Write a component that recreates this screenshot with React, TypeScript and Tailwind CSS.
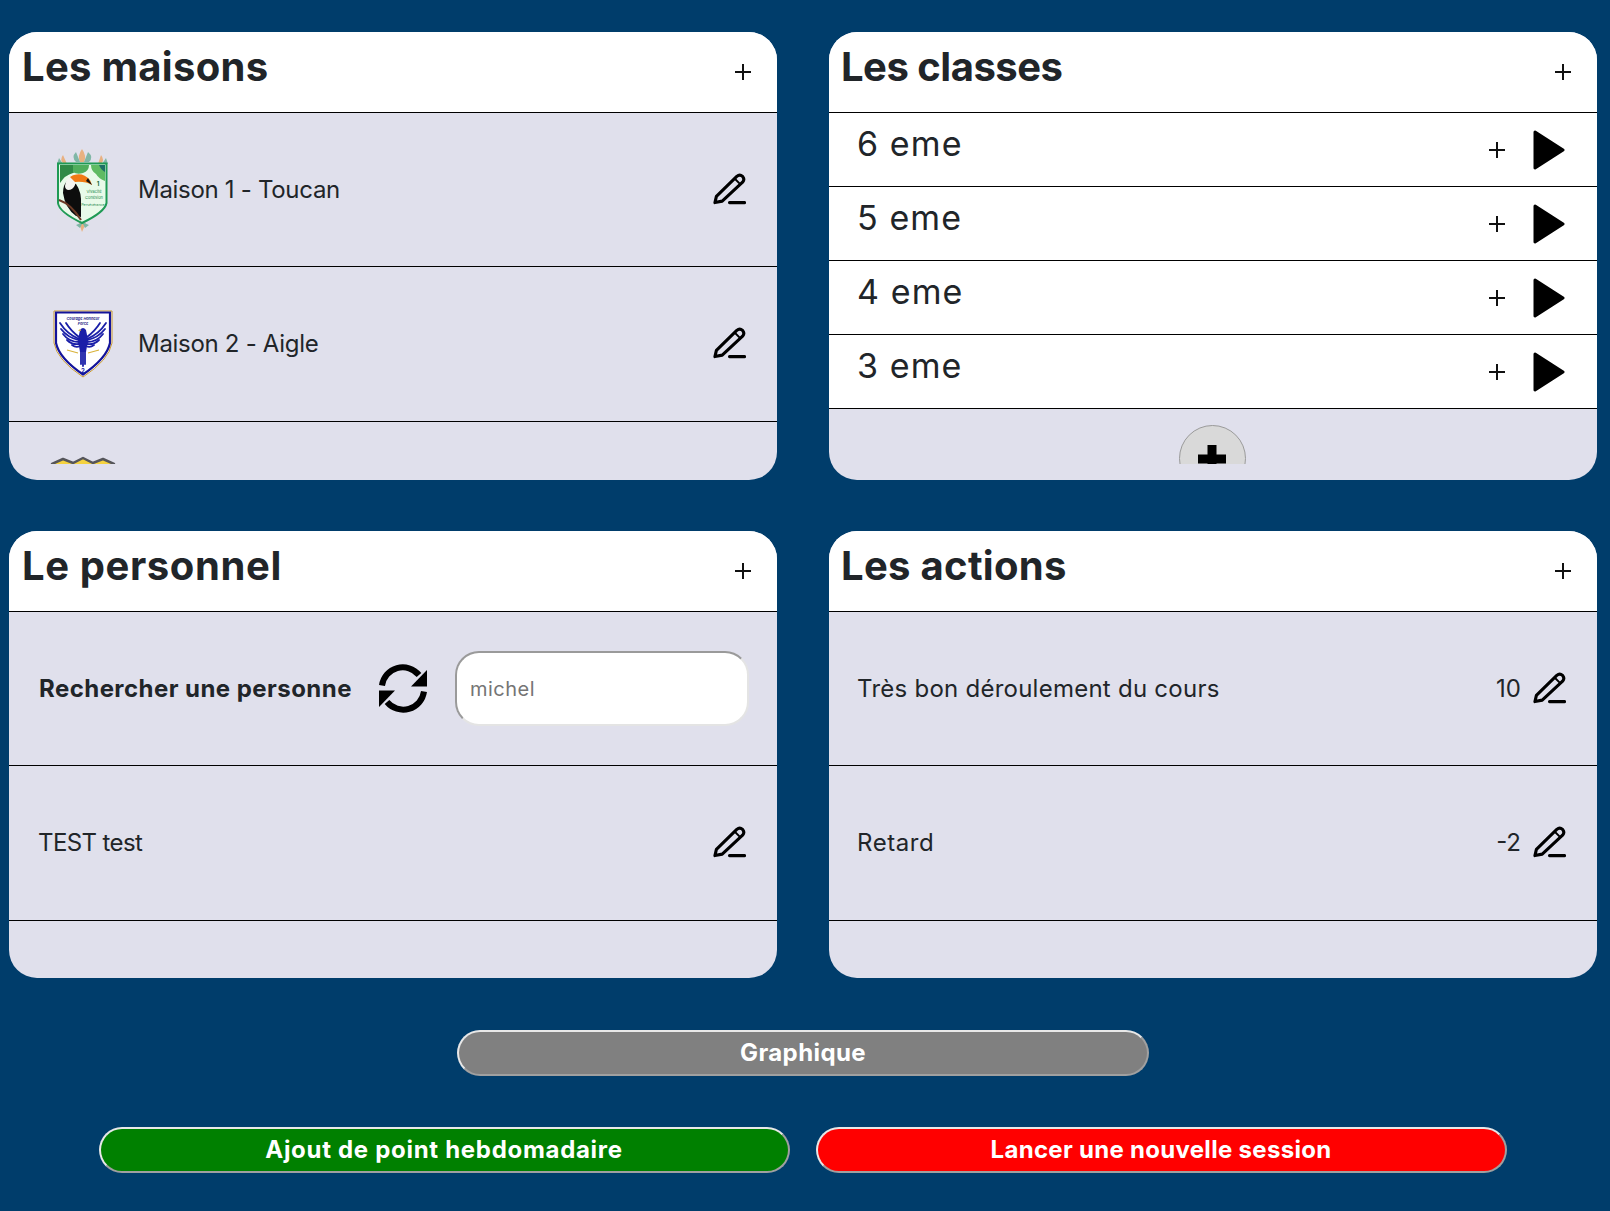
// ── Icons ──────────────────────────────────────────────────────────────────
function Plus() {
  return (
    <svg width="16" height="16" viewBox="0 0 16 16" className="shrink-0">
      <path d="M0 8H16M8 0V16" stroke="#111" strokeWidth="2" />
    </svg>
  )
}

function Pencil() {
  return (
    <svg width="33" height="32" viewBox="0 0 34 32" fill="none" stroke="#000" strokeWidth="3.2" strokeLinecap="round" strokeLinejoin="round" className="shrink-0 -mt-[2px]">
      <path d="M2 30 L3.5 23.5 L24.5 3 Q27.5 0.5 30.5 3 Q33 6 30.5 9 L9.5 28.5 Z" />
      <path d="M23 6 L27.5 10.5" strokeWidth="2" />
      <path d="M17 30 H32.5" />
    </svg>
  )
}

function Play() {
  return (
    <svg width="32" height="40" viewBox="0 0 32 40" className="shrink-0">
      <path d="M2 2 L30 20 L2 38 Z" fill="#000" stroke="#000" strokeWidth="3" strokeLinejoin="round" />
    </svg>
  )
}

function Refresh() {
  return (
    <svg width="48" height="49" viewBox="0 0 48 49" className="shrink-0">
      <path d="M3 21.5 A21 21 0 0 1 40 11" fill="none" stroke="#000" strokeWidth="6" />
      <path d="M48 6 V22.5 H32 Z" fill="#000" />
      <path d="M45 27.5 A21 21 0 0 1 8 38" fill="none" stroke="#000" strokeWidth="6" />
      <path d="M0 43 V26.5 H16 Z" fill="#000" />
    </svg>
  )
}

// ── House crests ───────────────────────────────────────────────────────────
function ToucanCrest() {
  return (
    <svg width="80" height="84" viewBox="0 0 80 84" className="shrink-0">
      <g opacity="0.85">
        <path d="M39 1 Q34 8 37 14 L41 14 Q44 8 39 1Z" fill="#e9a86f" />
        <path d="M33 4 Q28 9 33 14 L37 14Z" fill="#6fb09a" />
        <path d="M45 4 Q51 9 46 14 L41 14Z" fill="#6fb09a" />
        <path d="M20 7 Q16 12 21 16 L24 16Z" fill="#e9a86f" />
        <path d="M16 10 L14 16 L20 16Z" fill="#6fb09a" />
        <path d="M58 7 Q62 12 58 16 L55 16Z" fill="#e9a86f" />
        <path d="M63 10 L65 16 L59 16Z" fill="#6fb09a" />
        <path d="M39 84 L36 75 L43 75Z" fill="#e9a86f" />
        <path d="M33 77 L40 74 L37 80Z M46 77 L39 74 L42 80Z" fill="#6fb09a" />
      </g>
      <path d="M15 15.5 H63.5 V55 Q62 64 39 75 Q16 64 15 55 Z" fill="#e8fae9" stroke="#1f9a55" strokeWidth="2" />
      <path d="M17 17 H38 Q36 23 30 25 Q22 27 17 35 Z" fill="#2f8a46" />
      <path d="M30 17 H46 Q46 23 40 25 Q34 27 30 24Z" fill="#4fae5c" />
      <path d="M48 17 H62 V33 Q56 31 53 26 Q48 23 48 17Z" fill="#5fbb62" />
      <path d="M56 17 H62 V24 Q58 22 56 17Z" fill="#1e6f66" />
      <path d="M20 45 Q20 37 24 33 L33 36 Q39 44 38 58 L38 69 L33 68 Q22 60 20 45Z" fill="#0d0d0d" />
      <path d="M22 38 Q23 29 29 28 Q34 30 32 37 Q30 42 25 42 Q22 41 22 38Z" fill="#f4f4f0" />
      <path d="M27 29 Q30 27 31 27 Q40 24 47 32 L49 37 Q42 33 32 34Z" fill="#f07a14" />
      <path d="M45 30 L49 37 L43 33Z" fill="#111" />
      <path d="M16 52 Q28 56 38 72" stroke="#6b3a26" strokeWidth="2" fill="none" />
      <text x="55" y="38" fontSize="6" fontWeight="700" fill="#1a6b3a" textAnchor="middle">1</text>
      <text x="51" y="45" fontSize="4" fill="#1f8a4d" textAnchor="middle">Vivacité</text>
      <text x="51" y="51" fontSize="4" fill="#1f8a4d" textAnchor="middle">Cohésion</text>
      <text x="50" y="58" fontSize="3.6" fill="#1f8a4d" textAnchor="middle">Persévérance</text>
    </svg>
  )
}

function EagleCrest() {
  return (
    <svg width="80" height="84" viewBox="0 0 80 84" className="shrink-0">
      <path d="M11 9 H69 V41 Q66 58 40 75 Q14 58 11 41 Z" fill="#fff" stroke="#c99a2e" strokeWidth="1" />
      <path d="M13 10.5 H67 V41 Q64 56 40 72.5 Q16 56 13 41 Z" fill="#fff" stroke="#14149a" strokeWidth="2.2" />
      <text x="40" y="18" fontSize="3.8" fontStyle="italic" fontWeight="700" fill="#2a2a8a" textAnchor="middle">Courage   Honneur</text>
      <text x="40" y="23" fontSize="3.8" fontStyle="italic" fontWeight="700" fill="#2a2a8a" textAnchor="middle">Force</text>
      <g stroke="#1a1fa8" strokeWidth="1.8" strokeLinecap="round" fill="none">
        <path d="M36 37 Q24 32 17 21" />
        <path d="M36 38 Q25 36 18 27" />
        <path d="M36 40 Q26 40 20 32" />
        <path d="M36 42 Q29 43 24 38" />
        <path d="M37 44 Q33 46 29 43" />
        <path d="M36 35 Q28 29 23 21" />
        <path d="M44 37 Q56 32 63 21" />
        <path d="M44 38 Q55 36 62 27" />
        <path d="M44 40 Q54 40 60 32" />
        <path d="M44 42 Q51 43 56 38" />
        <path d="M43 44 Q47 46 51 43" />
        <path d="M44 35 Q52 29 57 21" />
        <path d="M38 50 L38 62 M40 50 L40 64 M42 50 L42 62" />
      </g>
      <path d="M37 28 Q40 24 43 28 L45 38 L43 50 H37 L35 38Z" fill="#1a1fa8" />
      <path d="M24 48 L35 51 M56 48 L45 51" stroke="#d8b23a" strokeWidth="1.2" />
      <path d="M37 27 L35 29 L38 29Z" fill="#d8b23a" />
      <text x="40" y="71" fontSize="6" fontWeight="700" fill="#1a1fa8" textAnchor="middle">2</text>
    </svg>
  )
}

function ThirdCrest() {
  return (
    <svg width="80" height="84" viewBox="0 0 80 84" className="shrink-0">
      <path d="M9 8 L20 3 L30 7 L40 2 L50 7 L60 3 L71 8 V44 Q68 60 40 76 Q12 60 9 44 Z" fill="#f4d23f" stroke="#55555a" strokeWidth="2.5" strokeLinejoin="round" />
    </svg>
  )
}

// ── Card bits ──────────────────────────────────────────────────────────────
function Card({ title, titleClass, children }: { title: string; titleClass: string; children: React.ReactNode }) {
  return (
    <div className="h-full rounded-[28px] overflow-hidden bg-[#e0e0ec] flex flex-col pb-[16px]">
      <div className="h-[81px] shrink-0 bg-white border-b border-black flex items-start justify-between pl-[13px] pr-[26px]">
        <h2 className={`text-[40px] leading-[70px] font-bold text-[#212529] ${titleClass}`}>{title}</h2>
        <div className="mt-[32px]"><Plus /></div>
      </div>
      <div className="flex-1 min-h-0 overflow-hidden">{children}</div>
    </div>
  )
}

function Row({ children }: { children: React.ReactNode }) {
  return (
    <div className="h-[154.3px] border-b border-black flex items-center pr-[31px] text-[24px] text-[#212529]">
      {children}
    </div>
  )
}

const HOUSES = [
  { name: 'Maison 1 - Toucan', crest: <ToucanCrest /> },
  { name: 'Maison 2 - Aigle', crest: <EagleCrest /> },
  { name: 'Maison 3', crest: <ThirdCrest /> },
]

const CLASSES = ['6 eme', '5 eme', '4 eme', '3 eme']

const ACTIONS = [
  { label: 'Très bon déroulement du cours', points: '10', text: 'tracking-[0.25px]' },
  { label: 'Retard', points: '-2', text: 'tracking-[0.55px]' },
]

const buttonBorder = 'border-2 border-t-[#e8e8e8] border-l-[#e8e8e8] border-b-[#a0a0a0] border-r-[#a0a0a0]'

// ── Page ───────────────────────────────────────────────────────────────────
export default function App() {
  return (
    <div className="min-h-[1211px] bg-[#003d6b] pt-[32px] font-[family-name:Inter,sans-serif]">
      <div className="grid grid-cols-[768px_768px] grid-rows-[448px_447px] gap-x-[52px] gap-y-[51px] pl-[9px]">

        {/* Les maisons */}
        <Card title="Les maisons" titleClass="tracking-[0.3px]">
          {HOUSES.map((h, i) => (
            <Row key={h.name}>
              <div className="ml-[34px] w-[80px] flex">{h.crest}</div>
              <span className={`ml-[15px] flex-1 tracking-[-0.3px] ${i === 2 ? 'invisible' : ''}`}>{h.name}</span>
              <Pencil />
            </Row>
          ))}
        </Card>

        {/* Les classes */}
        <Card title="Les classes" titleClass="-ml-[1px] -tracking-[0.5px]">
          {CLASSES.map((c) => (
            <div key={c} className="h-[74px] bg-white border-b border-black flex items-center pl-[28px] pr-[32px]">
              <span className="flex-1 text-[34px] leading-[62px] -mt-[12px] tracking-[1.1px] text-[#212529]">{c}</span>
              <Plus />
              <div className="ml-[28px]"><Play /></div>
            </div>
          ))}
          <div className="flex justify-center pt-[16px] pr-[2px]">
            <div className="w-[67px] h-[67px] rounded-full bg-[#d9d9d9] border-[1.5px] border-[#9a9a9a] flex justify-center pt-[19px] shrink-0">
              <svg width="28" height="28" viewBox="0 0 28 28">
                <path d="M0 14H28M14 0V28" stroke="#000" strokeWidth="9" />
              </svg>
            </div>
          </div>
        </Card>

        {/* Le personnel */}
        <Card title="Le personnel" titleClass="tracking-[0.6px]">
          <Row>
            <span className="ml-[30px] font-bold tracking-[0.45px] whitespace-nowrap">Rechercher une personne</span>
            <div className="ml-[27px]"><Refresh /></div>
            <input
              placeholder="michel"
              className="ml-[28px] w-[294px] h-[75px] rounded-[24px] bg-white pl-[13px] text-[20px] tracking-[0.5px] placeholder:text-[#757575] border-2 border-t-[#9a9a9a] border-l-[#9a9a9a] border-b-[#e4e4e4] border-r-[#e4e4e4]"
            />
          </Row>
          <Row>
            <span className="ml-[29px] flex-1 tracking-[-0.6px]">TEST test</span>
            <Pencil />
          </Row>
        </Card>

        {/* Les actions */}
        <Card title="Les actions" titleClass="-ml-[1px] tracking-[0.3px]">
          {ACTIONS.map((a) => (
            <Row key={a.label}>
              <span className={`ml-[28px] flex-1 ${a.text}`}>{a.label}</span>
              <span className="mr-[12px]">{a.points}</span>
              <Pencil />
            </Row>
          ))}
        </Card>
      </div>

      {/* Bottom buttons */}
      <div className="flex flex-col items-center mt-[52px]">
        <button className={`w-[692px] h-[46px] -ml-[4px] rounded-full bg-[#808080] text-white text-[24px] font-bold tracking-[0.4px] ${buttonBorder}`}>
          Graphique
        </button>
        <div className="flex gap-[26px] mt-[51px] -ml-[5px]">
          <button className={`w-[691px] h-[46px] rounded-full bg-[#008000] text-white text-[24px] font-bold tracking-[0.7px] ${buttonBorder}`}>
            Ajout de point hebdomadaire
          </button>
          <button className={`w-[691px] h-[46px] rounded-full bg-[#ff0000] text-white text-[24px] font-bold tracking-[0.3px] ${buttonBorder}`}>
            Lancer une nouvelle session
          </button>
        </div>
      </div>
    </div>
  )
}
